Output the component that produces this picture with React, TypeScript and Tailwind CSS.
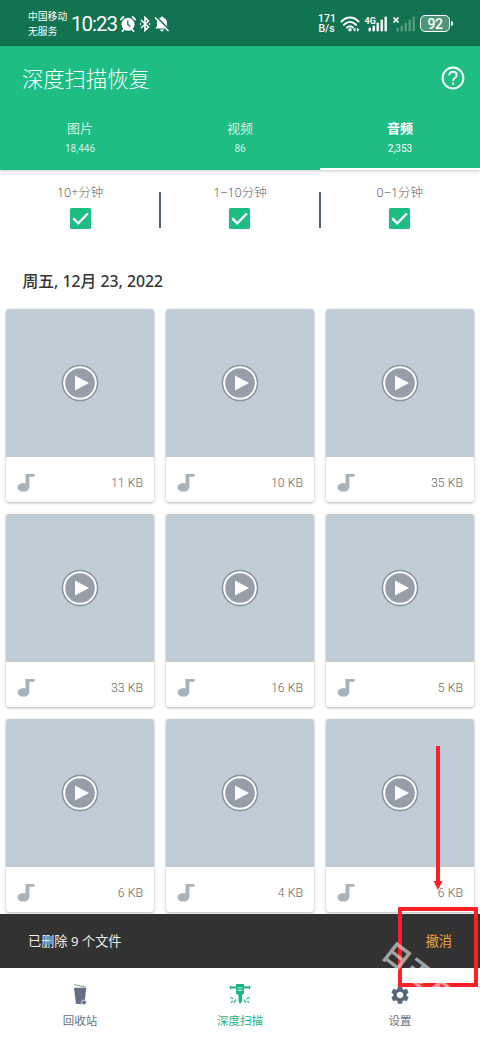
import { Fragment } from "react";

interface Tab {
  label: string;
  count: string;
}

const TABS: Tab[] = [
  { label: "图片", count: "18,446" },
  { label: "视频", count: "86" },
  { label: "音频", count: "2,353" },
];

const FILTERS = ["10+分钟", "1−10分钟", "0−1分钟"];
const SIZES = [11, 10, 35, 33, 16, 5, 6, 4, 6];

function SignalBars({ className }: { className: string }) {
  return (
    <svg viewBox="0 0 20 16" className={className} fill="currentColor">
      <rect x="0.5" y="11.5" width="2.4" height="4" rx="1" />
      <rect x="4.5" y="9.5" width="2.4" height="6" rx="1" />
      <rect x="8.5" y="6.5" width="2.4" height="9" rx="1" />
      <rect x="12.5" y="3.5" width="2.4" height="12" rx="1" />
      <rect x="16.5" y="0.5" width="2.4" height="15" rx="1" />
    </svg>
  );
}

function StatusBar() {
  return (
    <div className="flex h-[46px] shrink-0 items-center bg-[#11734f] pl-7 pr-[27px] pt-px text-white">
      <div className="w-10 text-[9.8px] leading-[15px]">
        <p>中国移动</p>
        <p>无服务</p>
      </div>
      <span className="ml-[3px] w-[46px] whitespace-nowrap pt-[2px] font-[Roboto] text-[20.5px] leading-none tracking-[-1px]">10:23</span>
      <svg viewBox="0 0 16 16" className="ml-[3px] size-4">
        <circle cx="8" cy="8.3" r="6.5" fill="white" />
        <path d="M.8 3.5 3.3 1M15.2 3.5 12.7 1M3.5 14 2.5 15.2M12.5 14l1 1.2" stroke="white" strokeWidth="1.8" strokeLinecap="round" />
        <path d="M7.8 4.5v4l2.6 2" stroke="#11734f" strokeWidth="1.3" fill="none" />
      </svg>
      <svg viewBox="0 0 12 16" className="ml-[3px] h-4 w-3" fill="none" stroke="white" strokeWidth="1.6">
        <path d="m2 4 7.5 7L6 14.5v-13L9.5 5 2 12" />
        <path d="M1 8h1M10.2 8h1" strokeWidth="1.8" />
      </svg>
      <svg viewBox="0 0 16 16" className="ml-[3px] size-4">
        <path d="M8 .5c.8 0 1.300.6 1.300 1.300C12 2.500 13 4.500 13 7v3l1.700 2.500H1.300L3 10V7c0-2.500 1-4.500 3.700-5.200C6.700 1.100 7.200.5 8 .5Z" fill="white" />
        <path d="M6 13.500h4c-.2 1.300-1 2-2 2s-1.800-.7-2-2Z" fill="white" />
        <path d="m1.500 0 14 14" stroke="#11734f" strokeWidth="1.6" />
        <path d="m1 1.500 13.500 13.500" stroke="white" strokeWidth="1.5" />
      </svg>
      <div className="ml-auto flex items-center">
        <div className="w-[17px] pt-px text-center font-[Roboto] text-[10.5px] font-medium leading-[10px]">
          <p>171</p>
          <p>B/s</p>
        </div>
        <svg viewBox="0 0 20 16" className="ml-[5px] h-4 w-5" fill="none" stroke="white" strokeWidth="2" strokeLinecap="round">
          <path d="M1.500 5.500c5-5.300 12-5.300 17 0M4 8.700c3.700-3.700 8.300-3.700 12 0M7 11.600c2-1.800 4-1.800 6 0" />
          <circle cx="10" cy="13.8" r="1.8" fill="white" stroke="none" />
          <path d="m13 13.800 2.500-2v4Zm6.500 0-2.500-2v4Z" fill="white" stroke="none" />
        </svg>
        <div className="relative ml-[8px] h-4 w-5">
          <SignalBars className="h-4 w-5" />
          <span className="absolute -left-[3.5px] top-[1px] font-[Roboto] text-[9px] font-bold leading-[9px]">4G</span>
        </div>
        <div className="relative ml-[8px] h-4 w-5">
          <SignalBars className="h-4 w-5 text-[#579b80]" />
          <svg viewBox="0 0 6 6" className="absolute -left-[3px] top-px size-[6px]" stroke="white" strokeWidth="1.6">
            <path d="m.5.5 5 5m0-5-5 5" />
          </svg>
        </div>
        <div className="ml-[4px] flex h-[17px] w-[30px] items-center justify-center rounded-[5px] border-[1.5px] border-white bg-[#519579] font-[Roboto] text-[14px] font-medium leading-none tracking-[-0.5px]">92</div>
        <div className="ml-px h-[5px] w-[2px] rounded-r bg-white" />
      </div>
    </div>
  );
}

function Header() {
  return (
    <header className="relative z-10 h-[124px] shrink-0 bg-[#1dbd84] text-white shadow-[0_1px_3px_rgba(0,0,0,0.22)]">
      <div className="flex h-[64px] items-center justify-between pl-[22px] pr-[15px]">
        <h1 className="pt-px text-[21.3px] font-light leading-none">深度扫描恢复</h1>
        <svg viewBox="0 0 24 24" className="size-6" fill="none" stroke="white" strokeWidth="2">
          <circle cx="12" cy="12" r="10.4" />
          <path d="M8.300 9.300c0-4.700 7.400-4.700 7.400 0 0 2.700-3.700 2.700-3.700 5.400" />
          <path d="M12 16.500v2.200" strokeWidth="2.2" />
        </svg>
      </div>
      <nav className="grid h-[60px] grid-cols-3">
        {TABS.map((tab, i) => (
          <div key={tab.label} className={i === 2 ? "border-b-2 border-white pt-[9px] text-center" : "pt-[9px] text-center text-[#d2f2e6]"}>
            <p className={i === 2 ? "text-[13px] font-bold leading-[18px]" : "text-[13px] leading-[18px]"}>{tab.label}</p>
            <p className="mt-[4px] font-[Roboto] text-[10px] leading-4">{tab.count}</p>
          </div>
        ))}
      </nav>
    </header>
  );
}

function Filters() {
  return (
    <div className="flex h-[84px] shrink-0">
      {FILTERS.map((label, i) => (
        <Fragment key={label}>
          {i > 0 && <div className="-mx-px mt-[22px] h-9 w-[1.5px] shrink-0 bg-[#536170]" />}
          <div className="flex flex-1 flex-col items-center pt-[15px]">
            <span className="text-[12.5px] font-light leading-4 text-[#606060]">{label}</span>
            <svg viewBox="0 0 21 21" className="mt-[7px] size-[21px]">
              <rect width="21" height="21" rx="1.5" fill="#1dbd84" />
              <path d="m3.300 10.300 5 5 9.500-9.800" fill="none" stroke="white" strokeWidth="2.4" />
            </svg>
          </div>
        </Fragment>
      ))}
    </div>
  );
}

function FileCard({ size }: { size: number }) {
  return (
    <div className="h-[193px] overflow-hidden rounded-[3px] bg-white shadow-[0_1px_3px_rgba(0,0,0,0.3)]">
      <div className="flex h-[148px] items-center justify-center bg-[#c1cdd6]">
        <svg viewBox="0 0 38 38" className="size-[38px]">
          <circle cx="19" cy="19" r="18.3" fill="#899299" />
          <circle cx="19" cy="19" r="15.8" fill="#969fa8" stroke="white" strokeWidth="2" />
          <path d="m14 11.500 14 7.500-14 7.500Z" fill="white" />
        </svg>
      </div>
      <div className="flex h-[45px] items-center justify-between px-[11px] pt-[6px]">
        <svg viewBox="0 0 18 19" className="size-[18px]" fill="#a8b2ba">
          <path d="M8.500 0H18v3h-5.500v11a6 4.700 0 0 1-6.300 4.600A6 4.600 0 0 1 0 14a6 4.600 0 0 1 8.500-4Z" />
        </svg>
        <span className="pt-[2px] font-[Roboto] text-[12.3px] font-light text-[#686868]">{size} KB</span>
      </div>
    </div>
  );
}

function Snackbar() {
  return (
    <div className="relative z-10 flex h-[54px] shrink-0 items-center justify-between bg-[#323232] px-7 pt-px text-[13.2px] text-[#eeeeee]">
      <span>已删除 9 个文件</span>
      <button className="text-[#f1a43a]">撤消</button>
    </div>
  );
}

function BottomNav() {
  return (
    <nav className="grid h-[72px] shrink-0 grid-cols-3 bg-white text-[11.5px] text-[#647182]">
      <div className="flex flex-col items-center pt-[15px]">
        <svg viewBox="0 0 24 24" className="size-6">
          <path d="M6 4.800h12.200L16.500 21H8Z" fill="#647182" />
          <path d="m5.800 1.500 12 2.700" stroke="#8a939d" />
          <circle cx="16" cy="19.5" r="2.4" fill="#647182" stroke="white" strokeWidth=".7" />
        </svg>
        <span className="mt-[5px] leading-[18px]">回收站</span>
      </div>
      <div className="flex flex-col items-center pt-[15px] text-[#1bb57e]">
        <svg viewBox="0 0 24 24" className="size-6" fill="currentColor">
          <path d="M8.500 1h7l1 2.500H21v-.8h1.200v3.500H21v-.8h-5v5.100l-2 1.500v6.500L12 21l-1.500-2.500V12L8 10.500V5.400H3v.8H1.800V2.700H3v.8h4.500Z" />
          <path d="M9.500 5h5M9.500 7.500h5" stroke="white" strokeWidth=".8" />
          <path d="m2.500 14.500 3 1.500M7.800 16.500 6 20M4.500 17.800 3 20M21.500 14.500l-3 1.500M16.200 16.500 18 20M19.500 17.800 21 20" fill="none" stroke="currentColor" strokeWidth="1.2" />
        </svg>
        <span className="mt-[5px] leading-[18px]">深度扫描</span>
      </div>
      <div className="flex flex-col items-center pt-[16px]">
        <svg viewBox="0 0 24 24" className="size-[22px]" fill="#56677a">
          <path d="M19.140 12.940c.04-.3.060-.61.060-.94 0-.32-.02-.64-.07-.94l2.030-1.580c.18-.14.23-.41.12-.61l-1.920-3.320c-.12-.22-.37-.29-.59-.22l-2.390.96c-.5-.38-1.030-.7-1.620-.94l-.36-2.540c-.04-.24-.24-.41-.48-.41h-3.840c-.24 0-.43.17-.47.41l-.36 2.540c-.59.24-1.130.57-1.620.94l-2.390-.96c-.22-.08-.47 0-.59.22L2.740 8.870c-.12.21-.08.47.12.61l2.030 1.580c-.05.3-.09.63-.09.94s.02.64.07.94l-2.030 1.580c-.18.14-.23.41-.12.61l1.920 3.320c.12.22.37.29.59.22l2.390-.96c.5.38 1.030.7 1.620.94l.36 2.540c.05.24.24.41.48.41h3.840c.24 0 .44-.17.47-.41l.36-2.540c.59-.24 1.130-.56 1.620-.94l2.390.96c.22.08.47 0 .59-.22l1.920-3.320c.12-.22.07-.47-.12-.61l-2.010-1.580zM12 15.600c-1.980 0-3.600-1.620-3.600-3.600s1.620-3.600 3.600-3.600 3.600 1.620 3.600 3.600-1.620 3.600-3.600 3.600z" />
        </svg>
        <span className="mt-[6px] leading-[18px]">设置</span>
      </div>
    </nav>
  );
}

function Annotations() {
  return (
    <div className="pointer-events-none absolute inset-0 z-20">
      <svg viewBox="0 0 12 144" className="absolute left-[432px] top-[746px] h-36 w-3" fill="#ff2027">
        <path d="M4 0h4v135h2.500L6 144l-4.500-9H4Z" />
      </svg>
      <div className="absolute left-[398px] top-[907px] h-20 w-20 rounded-[1px] border-4 border-[#ff2027]" />
      <span className="absolute left-[395px] top-[937px] origin-top-left rotate-[38deg] whitespace-nowrap text-[27px] font-bold leading-[27px] text-white/55">日玉友</span>
    </div>
  );
}

export default function App() {
  return (
    <div className="relative flex h-[1040px] w-[480px] flex-col overflow-hidden bg-white font-['Noto_Sans','Noto_Sans_CJK_SC',sans-serif]">
      <StatusBar />
      <Header />
      <Filters />
      <main className="min-h-0 flex-1 overflow-hidden px-[6px]">
        <h2 className="flex h-[55px] items-center pl-[16.5px] text-[15.8px] font-medium text-[#333]">周五, 12月 23, 2022</h2>
        <div className="grid grid-cols-3 gap-3">
          {SIZES.map((size, i) => <FileCard key={i} size={size} />)}
        </div>
      </main>
      <Snackbar />
      <BottomNav />
      <Annotations />
    </div>
  );
}
